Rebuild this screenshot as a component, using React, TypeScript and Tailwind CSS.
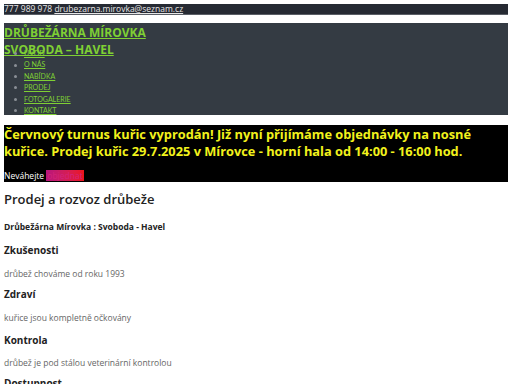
import React from "react";

const nav = ["ÚVOD", "O NÁS", "NABÍDKA", "PRODEJ", "FOTOGALERIE", "KONTAKT"];

export default function App() {
  return (
    <div className="bg-white min-h-[384px] h-[384px] px-[4px] pt-[4px] overflow-hidden" style={{ fontFamily: '"Open Sans", sans-serif' }}>
      <div className="bg-[#262a33] text-[#e6e6e6] text-[8.5px] leading-[10px] h-[11px] border-b border-[#5a5e66] whitespace-nowrap">
        777 989 978 <a className="underline">drubezarna.mirovka@seznam.cz</a>
      </div>
      <div className="bg-[#343b43] mt-[8px] h-[92px]">
        <div className="text-[#7fd034] font-bold text-[12px] leading-[17px] underline pt-[1px] whitespace-nowrap">
          DRŮBEŽÁRNA MÍROVKA
          <br />
          SVOBODA – HAVEL
        </div>
        <ul className="mt-[-10px] text-[7px] leading-[11.4px]" style={{ fontFamily: 'Lato, sans-serif' }}>
          {nav.map((n) => (
            <li key={n} className="flex items-center">
              <span className="w-[3px] h-[3px] rounded-full bg-[#8a8f96] ml-[10px] mr-[7px]" />
              <span className="text-[#7fd034] underline">{n}</span>
            </li>
          ))}
        </ul>
      </div>
      <div className="bg-black mt-[10px] h-[57px]">
        <div className="text-[#f2f21c] font-bold text-[12.8px] leading-[17px] pt-[1px]">
          Červnový turnus kuřic vyprodán! Již nyní přijímáme objednávky na nosné kuřice. Prodej kuřic 29.7.2025 v Mírovce - horní hala od 14:00 - 16:00 hod.
        </div>
        <div className="mt-[10px] text-[8.5px] leading-[11px] h-[11px] text-white flex items-center">
          <span>Neváhejte&nbsp;</span>
          <span className="bg-gradient-to-r from-[#b8147c] to-[#ec1418] text-[#d4237a] px-[1px]">objednat</span>
        </div>
      </div>
      <div className="text-[#222]">
        <h1 className="text-[13px] font-semibold leading-[16px] mt-[9px]">Prodej a rozvoz drůbeže</h1>
        <div className="text-[8.5px] font-bold mt-[14px] leading-[12px]">Drůbežárna Mírovka : Svoboda - Havel</div>
        <h2 className="text-[10px] font-bold leading-[14px] mt-[10px]">Zkušenosti</h2>
        <p className="text-[8.5px] text-[#666] mt-[11px] leading-[12px]">drůbež chováme od roku 1993</p>
        <h2 className="text-[10px] font-bold leading-[14px] mt-[7px]">Zdraví</h2>
        <p className="text-[8.5px] text-[#666] mt-[10.5px] leading-[12px]">kuřice jsou kompletně očkovány</p>
        <h2 className="text-[10px] font-bold leading-[14px] mt-[9.5px]">Kontrola</h2>
        <p className="text-[8.5px] text-[#666] mt-[10px] leading-[12px]">drůbež je pod stálou veterinární kontrolou</p>
        <h2 className="text-[10px] font-bold leading-[14px] mt-[7px]">Dostupnost</h2>
      </div>
    </div>
  );
}
